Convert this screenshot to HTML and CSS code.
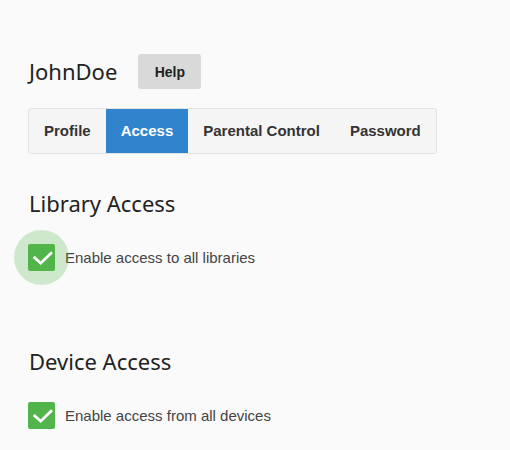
FILE: index.html
```html
<!DOCTYPE html>
<html>
<head>
<meta charset="utf-8">
<link rel="stylesheet" href="styles.css">
</head>
<body>
<div class="page">
  <div class="header">
    <h1 class="title">JohnDoe</h1>
    <button class="help">Help</button>
  </div>
  <div class="tabs">
    <span class="tab">Profile</span>
    <span class="tab active">Access</span>
    <span class="tab">Parental Control</span>
    <span class="tab">Password</span>
  </div>
  <div class="section first">
    <h2 class="heading">Library Access</h2>
    <label class="check-row">
      <span class="box focused">
        <svg viewBox="0 0 27 27" width="27" height="27"><path d="M6.7 13.8 L12.7 19.2 L23 9.2" fill="none" stroke="#fff" stroke-width="2.8" stroke-linecap="square"/></svg>
      </span>
      <span class="label">Enable access to all libraries</span>
    </label>
  </div>
  <div class="section second">
    <h2 class="heading">Device Access</h2>
    <label class="check-row">
      <span class="box">
        <svg viewBox="0 0 27 27" width="27" height="27"><path d="M6.7 13.8 L12.7 19.2 L23 9.2" fill="none" stroke="#fff" stroke-width="2.8" stroke-linecap="square"/></svg>
      </span>
      <span class="label">Enable access from all devices</span>
    </label>
  </div>
</div>
</body>
</html>
```
FILE: styles.css
```css
html, body {
  margin: 0;
  background: #fafafa;
}
.page {
  padding: 54px 0 0 28px;
}
.header {
  display: flex;
  align-items: center;
  height: 35px;
}
.title {
  margin: 0 0 0 1px;
  font-family: "Noto Sans", sans-serif;
  font-weight: 400;
  font-size: 22px;
  line-height: 35px;
  color: #222;
}
.help {
  margin-left: 21px;
  width: 63px;
  height: 35px;
  border: none;
  border-radius: 3px;
  background: #d9d9d9;
  font-family: "Liberation Sans", Arial, sans-serif;
  font-weight: 700;
  font-size: 14px;
  color: #222;
  padding: 0;
}
.tabs {
  margin-top: 19px;
  display: inline-flex;
  border: 1px solid #e3e3e3;
  border-radius: 3px;
  background: #f5f5f5;
}
.tab {
  padding: 0 15px;
  line-height: 44px;
  font-family: "Liberation Sans", Arial, sans-serif;
  font-weight: 700;
  font-size: 15px;
  color: #333;
}
.tab.active {
  background: #2f84cd;
  color: #fff;
}
.section.first {
  margin-top: 34px;
}
.section.second {
  margin-top: 75px;
}
.heading {
  margin: 0 0 0 1px;
  font-family: "Noto Sans", sans-serif;
  font-weight: 400;
  font-size: 22px;
  line-height: 30px;
  color: #222;
}
.check-row {
  margin-top: 26px;
  display: flex;
  align-items: center;
  height: 27px;
}
.box {
  position: relative;
  width: 27px;
  height: 27px;
  border-radius: 2px;
  background: #52b54b;
  display: block;
}
.box svg {
  position: relative;
  display: block;
}
.box.focused::before {
  content: "";
  position: absolute;
  left: -14px;
  top: -14px;
  width: 55px;
  height: 55px;
  border-radius: 50%;
  background: rgba(82, 181, 75, 0.26);
}
.label {
  margin-left: 10px;
  font-family: "Liberation Sans", Arial, sans-serif;
  font-size: 15px;
  color: #444;
}
```
